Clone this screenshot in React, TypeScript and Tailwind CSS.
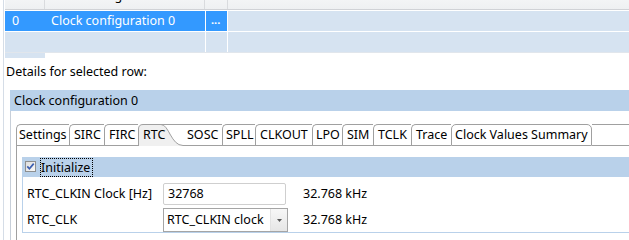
import React from "react";

const tabsBefore = [
  { label: "Settings", cls: "w-[53px] pl-[2px]" },
  { label: "SIRC", cls: "w-[35px] pl-[4px]" },
  { label: "FIRC", cls: "w-[34px] pl-[4px]" },
];

const tabsAfter = [
  { label: "SPLL", cls: "w-[33px] pl-[3px]" },
  { label: "CLKOUT", cls: "w-[57px] pl-[4px]" },
  { label: "LPO", cls: "w-[30px] pl-[3px]" },
  { label: "SIM", cls: "w-[31px] pl-[4px]" },
  { label: "TCLK", cls: "w-[38px] pl-[4px]" },
  { label: "Trace", cls: "w-[40px] pl-[4px]" },
];

const tabBase =
  "h-[22px] shrink-0 border-t border-l border-b border-[#a0a0a0] rounded-tl-[5px] leading-[20px] whitespace-nowrap overflow-hidden";

export default function App() {
  return (
    <div className="w-[629px] h-[240px] overflow-hidden bg-white pl-[3px] font-['Noto_Sans',sans-serif] text-[12.5px] text-black">
      <div className="h-full border-l border-[#d5dde7] flex flex-col">
        {/* table */}
        <div className="pl-[1px] flex flex-col shrink-0">
          <div className="-mt-[14px] h-[24px] flex border-b border-[#d0d2d6] bg-gradient-to-b from-[#fbfbfc] to-[#eef0f2] leading-[20px]">
            <div className="w-[40px] border-r border-[#d9dbde] pl-[7px]">#</div>
            <div className="w-[160px] border-r border-[#d9dbde] pl-[6px] whitespace-nowrap overflow-hidden">
              Clock configuration
            </div>
            <div className="w-[23px] border-r border-[#d9dbde] pl-[6px] text-[11px]">...</div>
            <div className="flex-1" />
          </div>
          <div className="mt-[1px] h-[20px] flex leading-[20px]">
            <div className="w-[200px] bg-[#3399ff] text-white flex">
              <div className="w-[40px] pl-[7px]">0</div>
              <div className="pl-[6px] whitespace-nowrap">Clock configuration 0</div>
            </div>
            <div className="ml-[1px] w-[21px] bg-[#3399ff] text-white text-[11px] font-bold pl-[5px] leading-[18px]">
              ...
            </div>
            <div className="ml-[1px] flex-1 bg-[#d6e3f1]" />
          </div>
          <div className="mt-[1px] h-[20px] flex">
            <div className="w-[200px] bg-[#d6e3f1]" />
            <div className="ml-[1px] w-[21px] bg-[#d6e3f1]" />
            <div className="ml-[1px] flex-1 bg-[#d6e3f1]" />
          </div>
          <div className="h-[1px] bg-[#e1e6ec]" />
          <div className="h-[5px] w-[40px] bg-[#d6e3f1]" />
        </div>

        {/* details */}
        <div className="mt-[6px] pl-[2px] leading-[16px] shrink-0">Details for selected row:</div>

        <div className="mt-[10px] ml-[6px] flex flex-col flex-1 min-h-0">
          <div className="h-[21px] bg-[#b9d1ea] pl-[4px] leading-[21px] shrink-0">Clock configuration 0</div>
          <div className="flex-1 border-l border-[#c7cfd9] pl-[5px] pt-[13px] flex flex-col min-h-0">
            {/* tab folder */}
            <div className="flex flex-col flex-1 min-h-0">
              <div className="flex h-[22px] shrink-0">
                {tabsBefore.map((t) => (
                  <div key={t.label} className={`${tabBase} ${t.cls}`}>
                    {t.label}
                  </div>
                ))}
                <div className="relative w-[45px] h-[22px] shrink-0 pl-[5px] pt-[1px] leading-[20px]">
                  <svg className="absolute left-0 top-0" width="45" height="22" viewBox="0 0 45 22">
                    <path d="M0.5 22 V5 Q0.5 0.5 5 0.5 H23 C31 0.5 33 21.5 45 21.5 V22 Z" fill="#f0f0f0" />
                    <path d="M0.5 22 V5 Q0.5 0.5 5 0.5 H45" fill="none" stroke="#a0a0a0" />
                    <path d="M23 0.5 C31 0.5 33 21.5 45 21.5" fill="none" stroke="#a0a0a0" />
                  </svg>
                  <span className="relative">RTC</span>
                </div>
                <div className="h-[22px] w-[39px] shrink-0 border-t border-b border-[#a0a0a0] pl-[4px] leading-[20px]">
                  SOSC
                </div>
                {tabsAfter.map((t) => (
                  <div key={t.label} className={`${tabBase} ${t.cls}`}>
                    {t.label}
                  </div>
                ))}
                <div className="h-[22px] w-[141px] shrink-0 border border-[#a0a0a0] rounded-t-[5px] pl-[3px] leading-[20px] whitespace-nowrap overflow-hidden">
                  Clock Values Summary
                </div>
                <div className="flex-1 h-[22px] border-t border-b border-[#a0a0a0]" />
              </div>

              <div className="flex-1 border-l border-[#a0a0a0] pl-[5px] pt-[11px]">
                <div className="border-l border-b border-[#b9d1ea]">
                  <div className="h-[20px] bg-[#b9d1ea] flex">
                    <svg className="ml-[2px] mt-[4px]" width="11" height="11" viewBox="0 0 11 11">
                      <defs>
                        <linearGradient id="cb" x1="0" y1="0" x2="1" y2="1">
                          <stop offset="0" stopColor="#dcdcdc" />
                          <stop offset="1" stopColor="#fbfbfb" />
                        </linearGradient>
                      </defs>
                      <rect x="0.5" y="0.5" width="10" height="10" fill="url(#cb)" stroke="#8e8f8f" />
                      <path d="M2.3 5.4 L4.4 7.8 L8.7 2.6" fill="none" stroke="#3b5eb0" strokeWidth="1.7" />
                    </svg>
                    <span className="ml-[4px] mt-[1px] h-[19px] border border-dotted border-black pr-[2px] leading-[17px]">
                      Initialize
                    </span>
                  </div>
                  <div className="pt-[6px] flex flex-col">
                    <div className="h-[22px] flex items-center">
                      <div className="w-[140px] pl-[4px] whitespace-nowrap">RTC_CLKIN Clock [Hz]</div>
                      <div className="w-[140px]">
                        <div className="w-[123px] h-[22px] border border-[#cfcfcf] rounded-[2px] pl-[4px] leading-[20px]">
                          32768
                        </div>
                      </div>
                      <div className="whitespace-nowrap">32.768 kHz</div>
                    </div>
                    <div className="mt-[3px] h-[24px] flex items-center">
                      <div className="w-[140px] pl-[4px]">RTC_CLK</div>
                      <div className="w-[140px]">
                        <div className="w-[125px] h-[24px] border border-[#a5a5a5] flex">
                          <div className="flex-1 pl-[3px] leading-[22px] whitespace-nowrap overflow-hidden">
                            RTC_CLKIN clock
                          </div>
                          <div className="w-[17px] h-full bg-gradient-to-b from-[#f7f7f7] to-[#e6e6e6] border-l border-[#e2e2e2] flex items-center justify-center">
                            <svg width="5" height="3" viewBox="0 0 5 3">
                              <path d="M0 0 H5 L2.5 3 Z" fill="#5a5a5a" />
                            </svg>
                          </div>
                        </div>
                      </div>
                      <div className="whitespace-nowrap">32.768 kHz</div>
                    </div>
                  </div>
                </div>
              </div>
            </div>
          </div>
        </div>
      </div>
    </div>
  );
}
